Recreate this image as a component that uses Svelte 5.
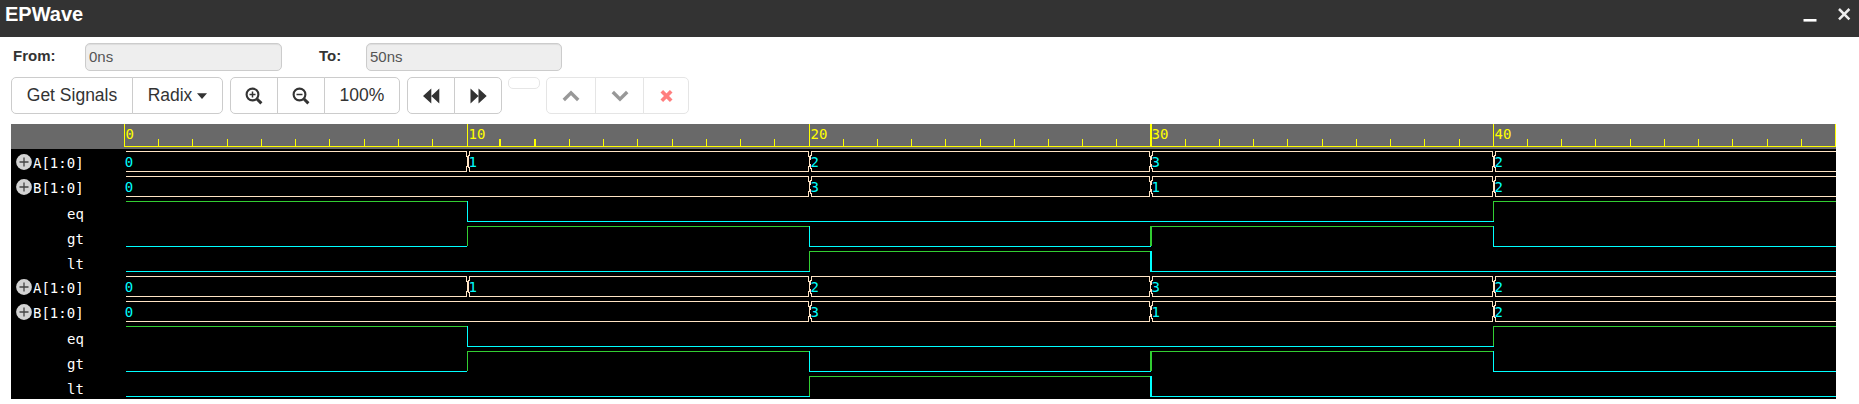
<script>
  const ticks = [124, 467, 809, 1150, 1493];
  const wide = [1150];
  const edges = [126, 467, 809, 1150, 1493, 1836];
  const minors = [];
  for (let i = 0; i < 5; i++) {
    for (let j = 1; j < 10; j++) minors.push({ x: Math.floor(124.5 + i * 342.2 + j * 34.22) - (i === 1 && j < 3 ? 1 : 0), w: i === 1 && j < 3 ? 2 : 1 });
  }
  const group = [
    { name: 'A[1:0]', bus: [[0, '0'], [1, '1'], [2, '2'], [3, '3'], [4, '2']] },
    { name: 'B[1:0]', bus: [[0, '0'], [2, '3'], [3, '1'], [4, '2']] },
    { name: 'eq', bits: [1, 0, 0, 0, 1] },
    { name: 'gt', bits: [0, 1, 0, 1, 0] },
    { name: 'lt', bits: [0, 0, 1, 0, 0] }
  ];
  const signals = [...group, ...group];

  function segments(bits) {
    const out = [];
    bits.forEach((b, i) => {
      const x = edges[i] - 11;
      const w = edges[i + 1] - edges[i];
      const color = b ? '#32cd32' : '#00ffff';
      out.push({ x, y: b ? 2 : 22, w: w + (i < 4 && i > 0 ? 1 : 0), h: 1, color });
      if (i && bits[i - 1] !== b) out.push({ x, y: 2, w: i === 3 ? 2 : 1, h: 20, color });
    });
    return out;
  }
  function outline(bus) {
    return bus.map(([k], i) => {
      const a = edges[k] - 11 + (k ? 2 : 0);
      const last = i === bus.length - 1;
      const next = last ? 5 : bus[i + 1][0];
      const end = last ? 1825 : edges[next] - 11 - 1;
      return { a, end, first: k === 0, last, cross: k === 2 || k === 3, crossEnd: next === 2 || next === 3 };
    });
  }
</script>

<header>
  <h1>EPWave</h1>
  <svg class="window-controls" width="60" height="37" viewBox="0 0 60 37">
    <path d="M4.5 20.3H17.5" stroke="#fff" stroke-width="2.6" />
    <path d="M40 9L50.4 19.4M50.4 9L40 19.4" stroke="#eee" stroke-width="2.5" />
  </svg>
</header>

<main>
  <div class="range">
    <label class="from" for="from">From:</label>
    <input id="from" value="0ns" disabled />
    <label class="to" for="to">To:</label>
    <input id="to" class="second" value="50ns" disabled />
  </div>

  <div class="toolbar">
    <div class="group">
      <button style="width: 122px">Get Signals</button>
      <button class="radix" style="width: 91px">Radix<svg width="10" height="6" viewBox="0 0 10 6"><path d="M0 .3H10L5 6Z" fill="#333" /></svg></button>
    </div>
    <div class="group">
      {#each ['in', 'out'] as z}
        <button style="width: 48px" aria-label="Zoom {z}">
          <svg width="18" height="18" viewBox="0 0 18 18" fill="none" stroke="#333">
            <circle cx="7.5" cy="7.5" r="5.9" stroke-width="2.1" />
            <path d="M12 12L16.4 16.4" stroke-width="3" />
            <path d={z === 'in' ? 'M4.5 7.5H10.5M7.5 4.5V10.5' : 'M4.5 7.5H10.5'} stroke-width="1.5" />
          </svg>
        </button>
      {/each}
      <button style="width: 76px">100%</button>
    </div>
    <div class="group third">
      <button style="width: 48px" aria-label="Previous"><svg width="17" height="16" viewBox="0 0 17 16"><path d="M0 8L8.3 .5V15.5ZM8.3 8L16.3 .5V15.5Z" fill="#333" /></svg></button>
      <button style="width: 48px" aria-label="Next"><svg width="17" height="16" viewBox="0 0 17 16"><path d="M.5 .5L8.5 8L.5 15.5ZM8.5 .5L16.7 8L8.5 15.5Z" fill="#333" /></svg></button>
    </div>
    <div class="stub"></div>
    <div class="group faded">
      <button style="width: 50px" aria-label="Up"><svg width="18" height="12" viewBox="0 0 18 12"><path d="M1.8 10L9 2.8L16.2 10" fill="none" stroke="#333" stroke-width="3.4" /></svg></button>
      <button style="width: 49px" aria-label="Down"><svg width="18" height="12" viewBox="0 0 18 12"><path d="M1.8 2L9 9.2L16.2 2" fill="none" stroke="#333" stroke-width="3.4" /></svg></button>
      <button style="width: 46px" aria-label="Remove"><svg width="13" height="12" viewBox="0 0 13 12"><path d="M1.8 1.3L11.2 10.7M11.2 1.3L1.8 10.7" stroke="#f00" stroke-width="3.7" /></svg></button>
    </div>
  </div>

  <section class="wave">
    <svg class="ruler" width="1825" height="25" shape-rendering="crispEdges">
      <rect x="113" y="22" width="1712" height="1" fill="#ff0" />
      {#each minors as m}
        <rect x={m.x - 11} y="15" width={m.w} height="7" fill="#ff0" />
      {/each}
      {#each ticks as t, i}
        <rect x={t - 11} y="0" width={wide.includes(t) ? 2 : 1} height="22" fill="#ff0" />
        <text x={t - 11 + 1.5} y="14.5" fill="#ff0">{i * 10}</text>
      {/each}
      <rect x="1824" y="0" width="1" height="22" fill="#ff0" />
    </svg>
    {#each signals as s}
      <div class="row">
        <div class="name" class:bus={s.bus}>
          {#if s.bus}
            <svg width="16" height="16" viewBox="0 0 16 16"><circle cx="8" cy="8" r="7.9" fill="#d3d3d3" /><path d="M3.5 8H12.5M8 3.5V12.5" stroke="#444" stroke-width="1.3" /></svg>
          {/if}
          <span>{s.name}</span>
        </div>
        <svg class="trace" width="1825" height="25" shape-rendering="crispEdges">
          {#if s.bus}
            {#each outline(s.bus) as o}
              <rect x={o.a} y="2" width={o.end - o.a + (o.last ? 0 : 1)} height="1" fill="#ffe4c4" />
              <rect x={o.a} y="22" width={o.end - o.a + (o.last ? 0 : 1)} height="1" fill="#ffe4c4" />
              {#if !o.first}
                <path d={o.cross ? `M${o.a + 0.5} 2V6H${o.a - 0.5}V10H${o.a - 1.5}V15H${o.a - 0.5}V19H${o.a + 0.5}V23` : `M${o.a + 0.5} 2V6H${o.a - 0.5}V18H${o.a + 0.5}V23`} fill="none" stroke="#ffe4c4" />
              {/if}
              {#if !o.last}
                <path d={o.crossEnd ? `M${o.end - 0.5} 2.5H${o.end + 0.5}V7H${o.end + 1.5}V17H${o.end + 0.5}V22` : `M${o.end + 0.5} 2V7H${o.end + 1.5}V17H${o.end + 0.5}V23`} fill="none" stroke="#ffe4c4" />
              {/if}
            {/each}
            {#each s.bus as [k, v]}
              <text x={edges[k] - 11 + (k ? 1.5 : -1.2)} y="17.5" fill="#0ff">{v}</text>
            {/each}
          {:else}
            {#each segments(s.bits) as r}
              <rect x={r.x} y={r.y} width={r.w} height={r.h} fill={r.color} />
            {/each}
          {/if}
        </svg>
      </div>
    {/each}
  </section>
</main>

<style>
  :global(body) { margin: 0; background: #fff; overflow: hidden; font-family: "Liberation Sans", Arial, sans-serif; color: #333; }
  header { height: 37px; background: #333; display: flex; justify-content: space-between; box-sizing: border-box; }
  h1 { margin: 0; padding-left: 5px; font-size: 20px; line-height: 28px; color: #fff; }
  main { padding: 0 0 0 11px; }
  .range { display: flex; height: 34px; padding-top: 6px; font-size: 15px; }
  label { font-weight: bold; line-height: 25px; padding-left: 2px; box-sizing: border-box; }
  .from { width: 74px; }
  .to { width: 49px; margin-left: 35px; }
  input { width: 197px; height: 28px; box-sizing: border-box; border: 1px solid #ccc; border-radius: 5px; background: #eee; color: #555; font: 15px "Liberation Sans", Arial, sans-serif; padding: 0 3px 1px; box-shadow: inset 0 1px 1px rgba(0,0,0,.075); }
  .second { width: 196px; }
  .toolbar { display: flex; height: 47px; align-items: flex-start; }
  .group { display: flex; margin-right: 7px; }
  .third { margin-right: 6px; }
  button { height: 37px; box-sizing: border-box; margin: 0 0 0 -1px; padding: 0; border: 1px solid #ccc; background: #fff; color: #333; font: 17.5px "Liberation Sans", Arial, sans-serif; display: flex; align-items: center; justify-content: center; }
  button:first-child { margin-left: 0; border-radius: 5px 0 0 5px; }
  button:last-child { border-radius: 0 5px 5px 0; }
  .radix { gap: 5px; }
  .stub { width: 32px; height: 12px; box-sizing: border-box; border: 1px solid #e6e6e6; border-radius: 5px; margin-right: 6px; }
  .faded { opacity: .5; }
  .wave { width: 1825px; height: 275px; background: #000; }
  .ruler { display: block; background: #696969; }
  text { font: 14px "DejaVu Sans Mono", monospace; }
  .row { height: 25px; display: grid; }
  .name, .trace { grid-area: 1 / 1; }
  .name { color: #fff; font: 14px/25px "DejaVu Sans Mono", monospace; display: flex; align-items: center; padding-left: 56px; }
  .name.bus { padding-left: 5px; }
  .name svg { margin-top: -2px; }
  .name span { padding-top: 3px; }
  .name.bus span { padding-top: 2px; padding-left: 1px; }
</style>
